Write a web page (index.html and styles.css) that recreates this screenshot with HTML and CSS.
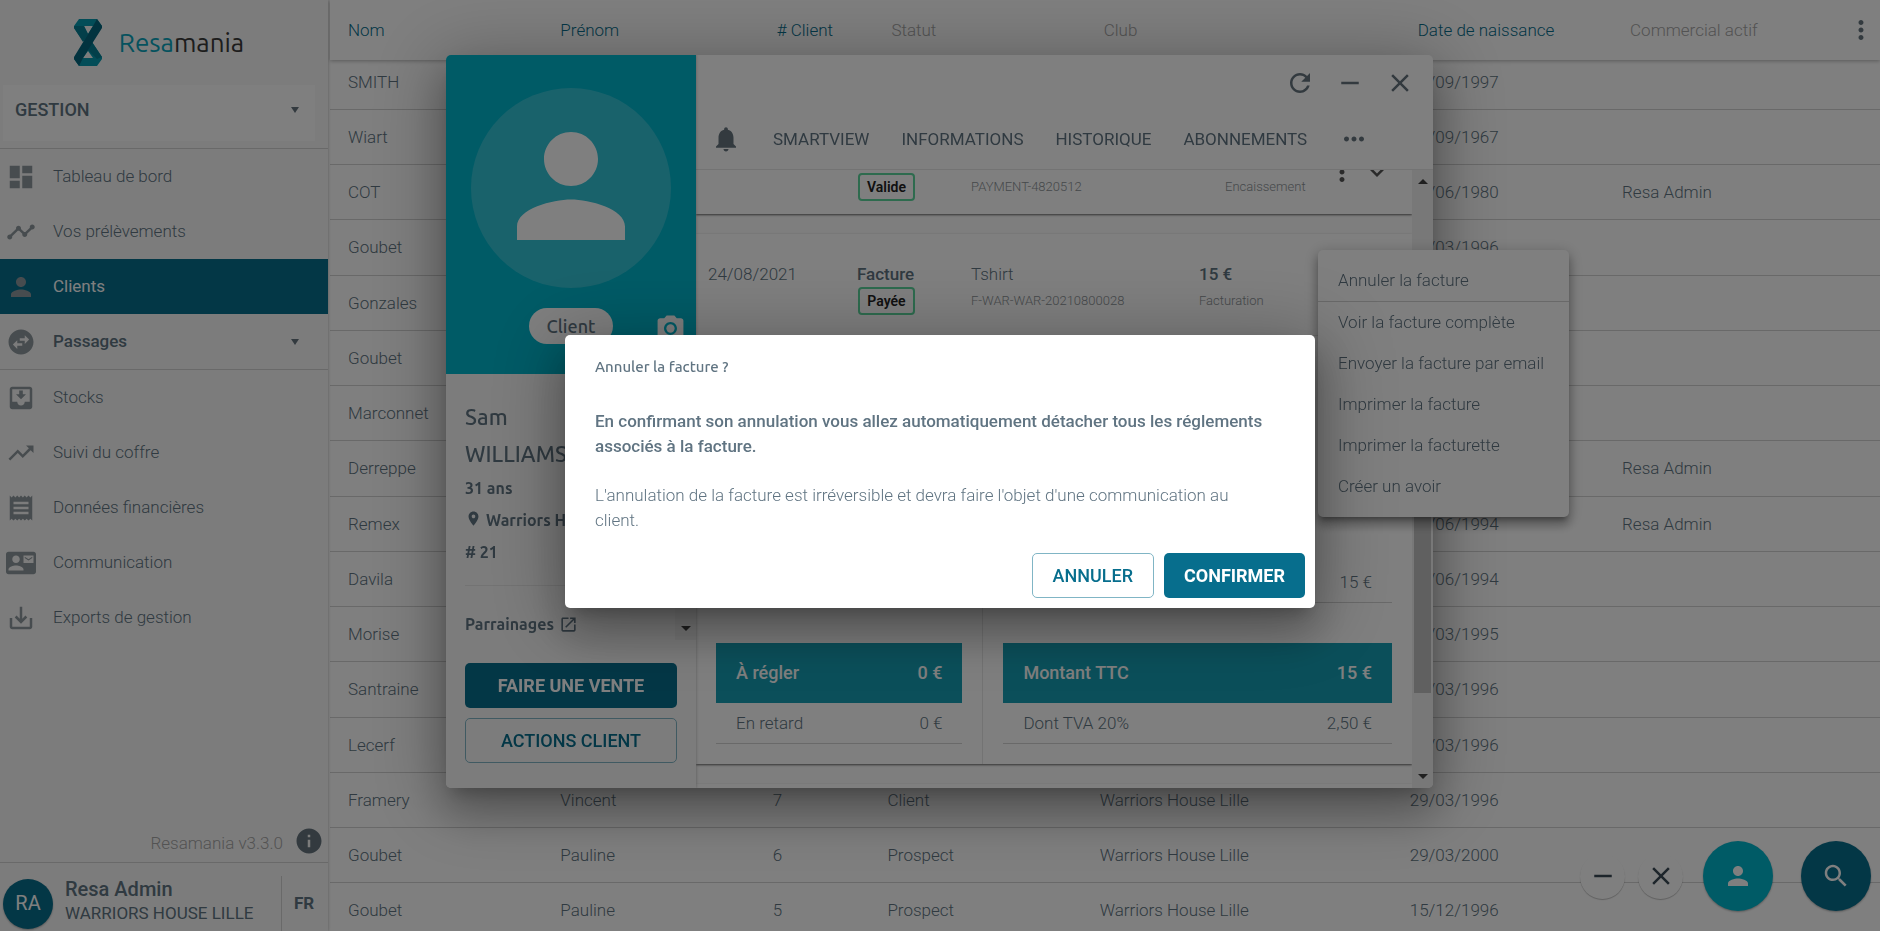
FILE: index.html
```html
<!DOCTYPE html>
<html lang="fr">
<head>
<meta charset="utf-8">
<title>Resamania - Clients</title>
<link rel="stylesheet" href="styles.css">
</head>
<body>
<svg class="sprite" aria-hidden="true">
  <symbol id="i-person" viewBox="0 0 24 24"><path d="M12 12c2.21 0 4-1.79 4-4s-1.79-4-4-4-4 1.79-4 4 1.79 4 4 4zm0 2c-2.67 0-8 1.34-8 4v2h16v-2c0-2.66-5.33-4-8-4z"/></symbol>
  <symbol id="i-close" viewBox="0 0 24 24"><path d="M19 6.41L17.59 5 12 10.59 6.41 5 5 6.41 10.59 12 5 17.59 6.41 19 12 13.41 17.59 19 19 17.59 13.41 12z"/></symbol>
  <symbol id="i-minus" viewBox="0 0 24 24"><path d="M19 13H5v-2h14v2z"/></symbol>
  <symbol id="i-more" viewBox="0 0 24 24"><path d="M12 8c1.1 0 2-.9 2-2s-.9-2-2-2-2 .9-2 2 .9 2 2 2zm0 2c-1.1 0-2 .9-2 2s.9 2 2 2 2-.9 2-2-.9-2-2-2zm0 6c-1.1 0-2 .9-2 2s.9 2 2 2 2-.9 2-2-.9-2-2-2z"/></symbol>
</svg>

<div class="app">
  <aside class="sidebar">
    <div class="brand">
      <svg class="brand-mark" viewBox="0 0 28 47" aria-hidden="true">
        <path fill="#079bb0" fill-rule="evenodd" d="M5 0h18l5 7-14 17-5-2L0 9V7zM10 7h9l-5 8z"/>
        <path fill="#067f95" d="M0 7h10l4 8-5 8L0 9z"/>
        <path fill="#079bb0" fill-rule="evenodd" d="M18 23l10 15v2l-5 7H5l-5-7 14-16zM14 32l5 7H9z"/>
        <path fill="#067f95" d="M18 23l10 15-5 2-9-9z"/>
        <path fill="#04667f" d="M23 0l5 7v2L9 39l-4 8-5-7v-2L19 7z"/>
      </svg>
      <span class="brand-name"><span class="brand-accent">Resa</span>mania</span>
    </div>
    <button class="section-select" type="button"><span>GESTION</span><i class="caret"></i></button>
    <nav class="nav">
      <a class="nav-item" href="#"><svg viewBox="0 0 24 24"><path d="M3 13h8V3H3v10zm0 8h8v-6H3v6zm10 0h8V11h-8v10zm0-18v6h8V3h-8z"/></svg>Tableau de bord</a>
      <a class="nav-item" href="#"><svg viewBox="0 0 24 24"><path d="M23 8c0 1.100-.9 2-2 2-.18 0-.35-.02-.51-.07l-3.560 3.550c.05.16.07.34.07.52 0 1.100-.9 2-2 2s-2-.9-2-2c0-.18.02-.36.07-.52l-2.550-2.550c-.16.05-.34.07-.52.07s-.36-.02-.52-.07l-4.550 4.560c.05.16.07.33.07.51 0 1.100-.9 2-2 2s-2-.9-2-2 .9-2 2-2c.18 0 .35.02.51.07l4.560-4.550C8.020 9.360 8 9.180 8 9c0-1.100.9-2 2-2s2 .9 2 2c0 .18-.02.36-.07.52l2.550 2.550c.16-.05.34-.07.52-.07s.36.02.52.07l3.550-3.560C19.020 8.350 19 8.180 19 8c0-1.100.9-2 2-2s2 .9 2 2z"/></svg>Vos prélèvements</a>
      <a class="nav-item nav-item--active" href="#"><svg><use href="#i-person"/></svg>Clients</a>
      <a class="nav-item nav-item--group" href="#"><svg viewBox="0 0 24 24"><path d="M22 12c0-5.520-4.480-10-10-10S2 6.480 2 12s4.480 10 10 10 10-4.480 10-10zm-7-5.500l3.500 3.500-3.500 3.500V11h-4V9h4V6.500zm-6 11L5.500 14 9 10.500V13h4v2H9v2.500z"/></svg>Passages<i class="caret"></i></a>
      <a class="nav-item" href="#"><svg viewBox="0 0 24 24"><path d="M16 9h-2.550V6h-2.900v3H8l4 4zm3-6H4.990C3.880 3 3 3.900 3 5v14c0 1.100.88 2 1.990 2H19c1.100 0 2-.9 2-2V5c0-1.100-.9-2-2-2zm0 12h-4c0 1.660-1.350 3-3 3s-3-1.340-3-3H4.990V5H19v10z"/></svg>Stocks</a>
      <a class="nav-item" href="#"><svg viewBox="0 0 24 24"><path d="M16 6l2.290 2.290-4.880 4.880-4-4L2 16.590 3.410 18l6-6 4 4 6.300-6.290L22 12V6z"/></svg>Suivi du coffre</a>
      <a class="nav-item" href="#"><svg viewBox="0 0 24 24"><path d="M18 17H6v-2h12v2zm0-4H6v-2h12v2zm0-4H6V7h12v2zM3 22l1.500-1.500L6 22l1.500-1.500L9 22l1.500-1.500L12 22l1.500-1.500L15 22l1.500-1.500L18 22l1.500-1.500L21 22V2l-1.500 1.500L18 2l-1.500 1.500L15 2l-1.500 1.500L12 2l-1.500 1.500L9 2 7.500 3.500 6 2 4.500 3.500 3 2v20z"/></svg>Données financières</a>
      <a class="nav-item" href="#"><svg viewBox="0 0 24 24"><path d="M21 8V7l-3 2-3-2v1l3 2 3-2zm1-5H2C.9 3 0 3.900 0 5v14c0 1.100.9 2 2 2h20c1.100 0 1.990-.9 1.990-2L24 5c0-1.100-.9-2-2-2zM8 6c1.660 0 3 1.340 3 3s-1.340 3-3 3-3-1.340-3-3 1.340-3 3-3zm6 12H2v-1c0-2 4-3.100 6-3.100s6 1.100 6 3.100v1zm8-6h-8V6h8v6z"/></svg>Communication</a>
      <a class="nav-item" href="#"><svg viewBox="0 0 24 24"><path d="M19 12v7H5v-7H3v7c0 1.100.9 2 2 2h14c1.100 0 2-.9 2-2v-7h-2zm-6 .67l2.590-2.580L17 11.500l-5 5-5-5 1.410-1.410L11 12.670V3h2z"/></svg>Exports de gestion</a>
    </nav>
    <div class="version"><span>Resamania v3.3.0</span><svg viewBox="0 0 24 24"><path d="M12 2C6.480 2 2 6.480 2 12s4.480 10 10 10 10-4.480 10-10S17.520 2 12 2zm1 15h-2v-6h2v6zm0-8h-2V7h2v2z"/></svg></div>
    <div class="account">
      <span class="account-avatar">RA</span>
      <div class="account-text"><div class="account-name">Resa Admin</div><div class="account-club">WARRIORS HOUSE LILLE</div></div>
      <button class="lang" type="button">FR</button>
    </div>
  </aside>

  <main class="content">
    <table class="clients">
      <colgroup><col class="c-m"><col class="c-m"><col class="c-s"><col class="c-m"><col class="c-l"><col class="c-m"><col></colgroup>
      <thead><tr><th class="on">Nom</th><th class="on">Prénom</th><th class="on"># Client</th><th>Statut</th><th>Club</th><th class="on">Date de naissance</th><th><div class="th-last">Commercial actif<button class="icon-btn" type="button" aria-label="Colonnes"><svg><use href="#i-more"/></svg></button></div></th></tr></thead>
      <tbody>
        <tr><td>SMITH</td><td></td><td></td><td></td><td></td><td>29/09/1997</td><td></td></tr>
        <tr><td>Wiart</td><td></td><td></td><td></td><td></td><td>29/09/1967</td><td></td></tr>
        <tr><td>COT</td><td></td><td></td><td></td><td></td><td>29/06/1980</td><td>Resa Admin</td></tr>
        <tr><td>Goubet</td><td></td><td></td><td></td><td></td><td>29/03/1996</td><td></td></tr>
        <tr><td>Gonzales</td><td></td><td></td><td></td><td></td><td></td><td></td></tr>
        <tr><td>Goubet</td><td></td><td></td><td></td><td></td><td></td><td></td></tr>
        <tr><td>Marconnet</td><td></td><td></td><td></td><td></td><td></td><td></td></tr>
        <tr><td>Derreppe</td><td></td><td></td><td></td><td></td><td></td><td>Resa Admin</td></tr>
        <tr><td>Remex</td><td></td><td></td><td></td><td></td><td>29/06/1994</td><td>Resa Admin</td></tr>
        <tr><td>Davila</td><td></td><td></td><td></td><td></td><td>29/06/1994</td><td></td></tr>
        <tr><td>Morise</td><td></td><td></td><td></td><td></td><td>29/03/1995</td><td></td></tr>
        <tr><td>Santraine</td><td></td><td></td><td></td><td></td><td>29/03/1996</td><td></td></tr>
        <tr><td>Lecerf</td><td></td><td></td><td></td><td></td><td>29/03/1996</td><td></td></tr>
        <tr><td>Framery</td><td>Vincent</td><td>7</td><td>Client</td><td>Warriors House Lille</td><td>29/03/1996</td><td></td></tr>
        <tr><td>Goubet</td><td>Pauline</td><td>6</td><td>Prospect</td><td>Warriors House Lille</td><td>29/03/2000</td><td></td></tr>
        <tr><td>Goubet</td><td>Pauline</td><td>5</td><td>Prospect</td><td>Warriors House Lille</td><td>15/12/1996</td><td></td></tr>
      </tbody>
    </table>
  </main>
</div>

<section class="client-window">
  <div class="profile">
    <div class="profile-hero">
      <div class="avatar"><svg><use href="#i-person"/></svg></div>
      <div class="hero-foot"><span class="status-pill">Client</span><svg class="camera" viewBox="0 0 24 24"><circle cx="12" cy="12" r="3.200"/><path d="M9 2L7.170 4H4c-1.100 0-2 .9-2 2v12c0 1.100.9 2 2 2h16c1.100 0 2-.9 2-2V6c0-1.100-.9-2-2-2h-3.170L15 2H9zm3 15c-2.760 0-5-2.240-5-5s2.240-5 5-5 5 2.240 5 5-2.240 5-5 5z"/></svg></div>
    </div>
    <div class="profile-scroll">
      <div class="profile-info">
        <div class="profile-name">Sam</div>
        <div class="profile-name">WILLIAMS</div>
        <p class="profile-line">31 ans</p>
        <p class="profile-line"><svg viewBox="0 0 24 24"><path d="M12 2C8.130 2 5 5.130 5 9c0 5.250 7 13 7 13s7-7.750 7-13c0-3.870-3.130-7-7-7zm0 9.500c-1.380 0-2.500-1.120-2.500-2.500s1.120-2.500 2.500-2.500 2.500 1.120 2.500 2.500-1.120 2.500-2.500 2.500z"/></svg>Warriors House</p>
        <p class="profile-line"># 21</p>
        <a class="profile-link" href="#">Parrainages<svg viewBox="0 0 24 24"><path d="M19 19H5V5h7V3H5c-1.110 0-2 .9-2 2v14c0 1.100.89 2 2 2h14c1.100 0 2-.9 2-2v-7h-2v7zM14 3v2h3.590l-9.830 9.830 1.410 1.410L19 6.410V10h2V3h-7z"/></svg></a>
      </div>
      <div class="scrollbar"><i class="arrow-down"></i></div>
    </div>
    <div class="profile-actions">
      <button class="btn btn--solid" type="button">FAIRE UNE VENTE</button>
      <button class="btn btn--outline" type="button">ACTIONS CLIENT</button>
    </div>
  </div>
  <div class="detail">
    <div class="window-bar">
      <button class="icon-btn" type="button" aria-label="Actualiser"><svg viewBox="0 0 24 24"><path d="M17.650 6.350C16.200 4.900 14.210 4 12 4c-4.420 0-7.990 3.580-7.990 8s3.570 8 7.990 8c3.730 0 6.840-2.550 7.730-6h-2.080c-.82 2.330-3.040 4-5.650 4-3.310 0-6-2.690-6-6s2.690-6 6-6c1.660 0 3.140.69 4.220 1.780L13 11h7V4l-2.350 2.350z"/></svg></button>
      <button class="icon-btn" type="button" aria-label="Réduire"><svg><use href="#i-minus"/></svg></button>
      <button class="icon-btn" type="button" aria-label="Fermer"><svg><use href="#i-close"/></svg></button>
    </div>
    <nav class="tabs">
      <button class="icon-btn" type="button" aria-label="Notifications"><svg viewBox="0 0 24 24"><path d="M12 22c1.100 0 2-.9 2-2h-4c0 1.100.89 2 2 2zm6-6v-5c0-3.070-1.640-5.640-4.500-6.320V4c0-.83-.67-1.500-1.500-1.500s-1.500.67-1.500 1.500v.68C7.630 5.360 6 7.920 6 11v5l-2 2v1h16v-1l-2-2z"/></svg></button>
      <a href="#">SMARTVIEW</a><a href="#">INFORMATIONS</a><a href="#">HISTORIQUE</a><a href="#">ABONNEMENTS</a>
      <button class="icon-btn" type="button" aria-label="Plus"><svg viewBox="0 0 24 24"><path d="M6 10c-1.100 0-2 .9-2 2s.9 2 2 2 2-.9 2-2-.9-2-2-2zm12 0c-1.100 0-2 .9-2 2s.9 2 2 2 2-.9 2-2-.9-2-2-2zm-6 0c-1.100 0-2 .9-2 2s.9 2 2 2 2-.9 2-2-.9-2-2-2z"/></svg></button>
    </nav>
    <div class="feed-wrap">
      <div class="feed">
        <article class="card card--payment">
          <span></span>
          <span><span class="badge">Valide</span></span>
          <span class="ref">PAYMENT-4820512</span>
          <span class="ref">Encaissement</span>
          <span class="card-tools"><svg><use href="#i-more"/></svg><svg viewBox="0 0 24 24"><path d="M16.590 8.590L12 13.170 7.410 8.590 6 10l6 6 6-6z"/></svg></span>
        </article>
        <article class="card card--invoice">
          <header class="entry">
            <div>24/08/2021</div>
            <div><strong>Facture</strong><span class="badge">Payée</span></div>
            <div>Tshirt<span class="ref">F-WAR-WAR-20210800028</span></div>
            <div><strong>15 €</strong><span class="ref">Facturation</span></div>
          </header>
          <div class="sums">
            <div class="sum-col">
              <div class="sum-total"><span>À régler</span><span>0 €</span></div>
              <div class="sum-row"><span>En retard</span><span>0 €</span></div>
            </div>
            <div class="sum-col">
              <div class="sum-row sum-row--first"><span></span><span>15 €</span></div>
              <div class="sum-total"><span>Montant TTC</span><span>15 €</span></div>
              <div class="sum-row"><span>Dont TVA 20%</span><span>2,50 €</span></div>
            </div>
          </div>
        </article>
        <div class="card card--next"></div>
      </div>
      <div class="scrollbar scrollbar--tall"><i class="arrow-up"></i><i class="thumb"></i><i class="arrow-down"></i></div>
    </div>
  </div>
</section>

<div class="menu" role="menu">
  <button type="button" role="menuitem">Annuler la facture</button>
  <button type="button" role="menuitem">Voir la facture complète</button>
  <button type="button" role="menuitem">Envoyer la facture par email</button>
  <button type="button" role="menuitem">Imprimer la facture</button>
  <button type="button" role="menuitem">Imprimer la facturette</button>
  <button type="button" role="menuitem">Créer un avoir</button>
</div>

<div class="fabs">
  <button class="fab fab--small" type="button" aria-label="Réduire"><svg><use href="#i-minus"/></svg></button>
  <button class="fab fab--small" type="button" aria-label="Fermer"><svg><use href="#i-close"/></svg></button>
  <button class="fab fab--cyan" type="button" aria-label="Client"><svg><use href="#i-person"/></svg></button>
  <button class="fab fab--blue" type="button" aria-label="Rechercher"><svg viewBox="0 0 24 24"><path d="M15.500 14h-.79l-.28-.27C15.410 12.590 16 11.110 16 9.500 16 5.910 13.090 3 9.500 3S3 5.910 3 9.500 5.910 16 9.500 16c1.610 0 3.090-.59 4.230-1.570l.27.28v.79l5 4.990L20.490 19l-4.990-5zm-6 0C7.010 14 5 11.990 5 9.500S7.010 5 9.500 5 14 7.010 14 9.500 11.990 14 9.500 14z"/></svg></button>
</div>

<div class="backdrop">
  <div class="dialog" role="dialog" aria-labelledby="dlg-title">
    <h1 class="dialog-title" id="dlg-title">Annuler la facture ?</h1>
    <div class="dialog-body">
      <p><strong>En confirmant son annulation vous allez automatiquement détacher tous les réglements<br>associés à la facture.</strong></p>
      <p>L'annulation de la facture est irréversible et devra faire l'objet d'une communication au<br>client.</p>
    </div>
    <div class="dialog-actions">
      <button class="btn btn--outline" type="button">ANNULER</button>
      <button class="btn btn--solid" type="button">CONFIRMER</button>
    </div>
  </div>
</div>
</body>
</html>
```
FILE: styles.css
```css
:root {
  --text: #607482;
  --icon: #66757f;
  --muted: #a6a6a6;
  --primary: #076e8d;
  --cyan: #00b6cd;
  --line: #d2d2d2;
  --panel: #f9f9f9;
  --display: Ubuntu, "Noto Sans", sans-serif;
  --elevation: 0 11px 15px -7px rgba(0, 0, 0, .2), 0 24px 38px 3px rgba(0, 0, 0, .2), 0 9px 70px 10px rgba(0, 0, 0, .25);
}

* { box-sizing: border-box; }

body {
  margin: 0;
  height: 100vh;
  overflow: hidden;
  background: #fff;
  color: var(--text);
  font: 300 17px/25px Roboto, sans-serif;
}

a { color: inherit; text-decoration: none; }
button { font: inherit; color: inherit; background: none; border: 0; padding: 0; }
h1, p { margin: 0; }
strong { font-weight: 500; }
svg { width: 30px; height: 30px; fill: currentColor; flex: none; display: block; }
.sprite { display: none; }
.icon-btn { display: flex; color: var(--icon); }

.caret {
  border: 4px solid transparent;
  border-top: 6px solid var(--icon);
  border-bottom: 0;
}

/* Shell */
.app { display: flex; height: 100vh; }

.sidebar {
  width: 328px;
  flex: none;
  display: flex;
  flex-direction: column;
  background: var(--panel);
  box-shadow: 0 0 3px rgba(0, 0, 0, .3);
  z-index: 1;
}

.brand {
  display: flex;
  align-items: center;
  justify-content: center;
  gap: 17px;
  height: 85px;
  padding-right: 10px;
}
.brand-mark { width: 28px; height: 47px; }
.brand-name { font: 400 26px/30px var(--display); color: #3a3a3a; }
.brand-accent { color: #0aa4bc; }

.section-select {
  display: flex;
  align-items: center;
  justify-content: space-between;
  height: 56px;
  margin: 0 13px 7px 3px;
  padding: 0 16px 7px 12px;
  background: #fff;
  font-weight: 500;
  font-size: 18px;
}

.nav { border-top: 1px solid var(--line); }
.nav-item {
  display: flex;
  align-items: center;
  gap: 17px;
  height: 55px;
  padding: 0 29px 0 6px;
}
.nav-item svg { color: #8f999e; }
.nav-item .caret { margin-left: auto; }
.nav-item--active { background: var(--primary); color: #fff; font-weight: 400; }
.nav-item--group { height: 56px; border-bottom: 1px solid var(--line); font-weight: 500; }

.version {
  display: flex;
  align-items: center;
  justify-content: flex-end;
  gap: 11px;
  margin-top: auto;
  padding: 0 4px 6px 0;
  color: var(--muted);
}
.version span { padding-top: 4px; }
.version svg { color: var(--icon); }

.account {
  display: flex;
  align-items: center;
  height: 69px;
  padding: 13px 0 0 3px;
  border-top: 1px solid var(--line);
}
.account-avatar {
  display: grid;
  place-items: center;
  width: 50px;
  height: 50px;
  border-radius: 50%;
  background: var(--primary);
  color: #fff;
  font-weight: 400;
  font-size: 20px;
  box-shadow: 0 1px 2px rgba(0, 0, 0, .3);
}
.account-text { flex: 1; padding: 0 0 5px 12px; font-weight: 400; line-height: 24px; }
.account-name { font-weight: 500; font-size: 20px; }
.lang {
  align-self: stretch;
  width: 47px;
  padding-right: 2px;
  border-left: 1px solid var(--line);
  font-weight: 700;
}

/* Client list */
.content { flex: 1; min-width: 0; padding-left: 2px; overflow: hidden; }
.clients { width: 100%; table-layout: fixed; border-spacing: 0; }
.c-m { width: 13.7%; }
.c-s { width: 7.4%; }
.c-l { width: 20%; }
.clients thead { position: relative; z-index: 1; box-shadow: 0 1px 4px rgba(0, 0, 0, .3); background: #fff; }
.clients th {
  height: 60px;
  padding: 0 0 0 18px;
  text-align: left;
  font-weight: 300;
  color: var(--muted);
}
.clients th:nth-child(n + 3) { padding-left: 22px; }
.clients th:nth-child(n + 6) { padding-left: 26px; }
.clients th.on { color: var(--primary); }
.th-last { display: flex; justify-content: space-between; align-items: center; padding-right: 4px; }
.clients td {
  height: 55px;
  padding: 0 0 0 18px;
  border-bottom: 1px solid var(--line);
}
.clients tr:nth-child(4n) td { height: 56px; }
.clients tbody tr:first-child td { height: 50px; padding-bottom: 5px; }

/* Client window */
.client-window {
  position: fixed;
  left: 446px;
  top: 55px;
  width: 987px;
  display: flex;
  border-radius: 5px;
  overflow: hidden;
  background: #fff;
  box-shadow: var(--elevation);
  z-index: 2;
}
.profile {
  width: 250px;
  flex: none;
  display: flex;
  flex-direction: column;
  background: var(--panel);
  box-shadow: 0 0 3px rgba(0, 0, 0, .3);
  z-index: 1;
}
.profile-hero { padding: 33px 0 30px; background: var(--cyan); }
.avatar {
  display: grid;
  place-items: center;
  width: 200px;
  height: 200px;
  margin: 0 auto 20px;
  padding-bottom: 4px;
  border-radius: 50%;
  background: rgba(255, 255, 255, .2);
  color: #fff;
}
.avatar svg { width: 162px; height: 162px; }
.hero-foot { display: grid; grid-template-columns: 1fr auto 1fr; align-items: center; color: #fff; }
.camera { width: 31px; height: 31px; justify-self: end; margin: 5px 10px 0 0; }
.status-pill {
  grid-column: 2;
  padding: 5px 18px;
  border-radius: 18px;
  background: #fff;
  color: var(--text);
  font: 500 18px/26px var(--display);
}
.profile-scroll { display: flex; height: 266px; }
.profile-info { flex: 1; padding: 24px 0 0 19px; font-family: var(--display); font-weight: 600; overflow: hidden; white-space: nowrap; }
.profile-name { font: 500 22px/37px var(--display); }
.profile-line { display: flex; align-items: center; gap: 4px; height: 32px; font-size: 16px; }
.profile-line svg { width: 17px; height: 17px; margin-bottom: 4px; }
.profile-link {
  display: flex;
  align-items: center;
  gap: 5px;
  margin-top: 17px;
  padding-top: 26px;
  border-top: 1px solid #e6e6e6;
  font-size: 16px;
}
.profile-link svg { width: 19px; height: 19px; }
.profile-actions { display: grid; gap: 10px; padding: 23px 19px 25px; }

.btn {
  height: 45px;
  padding: 0 20px 1px;
  border-radius: 5px;
  font-weight: 500;
  font-size: 18px;
}
.btn--solid { background: var(--primary); color: #fff; font-weight: 700; }
.btn--outline { border: 1px solid #80b5c5; color: var(--primary); }

.scrollbar {
  width: 21px;
  flex: none;
  display: flex;
  flex-direction: column;
  align-items: center;
  padding: 9px 0;
  background: #f1f1f1;
}
.arrow-down { margin-top: auto; border: 5px solid transparent; border-top-color: #404040; border-bottom: 0; }
.arrow-up { border: 5px solid transparent; border-bottom-color: #404040; border-top: 0; }
.thumb { width: 17px; height: 240px; margin: auto 0 81px; background: #c1c1c1; }
.thumb + .arrow-down { margin-top: 0; }

.detail { flex: 1; min-width: 0; display: flex; flex-direction: column; }
.window-bar { display: flex; justify-content: flex-end; gap: 20px; padding: 13px 18px 11px; }
.tabs {
  display: flex;
  align-items: center;
  gap: 32px;
  height: 61px;
  padding: 0 15px;
  border-bottom: 1px solid #e6e6e6;
  font-weight: 400;
}
.feed-wrap { flex: 1; display: flex; }
.feed { flex: 1; display: flex; flex-direction: column; gap: 20px; background: #fcfcfc; }
.card { background: #fff; box-shadow: 0 1px 2px rgba(0, 0, 0, .6); }
.card--payment, .entry {
  display: grid;
  grid-template-columns: 149px 114px 228px 1fr;
  padding-left: 12px;
}
.card--payment { grid-template-columns: 149px 114px 254px 1fr auto; height: 44px; overflow: hidden; clip-path: inset(0 0 -4px 0); }
.card--payment .badge { margin-top: 3px; }
.card--payment > .ref { margin-top: 8px; }
.card-tools { display: flex; gap: 5px; margin-top: -13px; padding-right: 20px; color: #555; }
.card--next { flex: 1; min-height: 2px; }
.entry { padding-top: 28px; height: 102px; border-bottom: 1px solid #e6e6e6; }
.badge {
  display: block;
  width: 57px;
  margin-left: 1px;
  border: 2px solid #5cd79d;
  border-radius: 4px;
  color: #222;
  font-weight: 600;
  font-size: 14px;
  line-height: 24px;
  text-align: center;
}
.ref { display: block; font-size: 13px; line-height: 18px; margin-top: 5px; color: #8c9296; }
.sums { display: grid; grid-template-columns: 2fr 3fr; height: 428px; }
.sum-col { display: flex; flex-direction: column; justify-content: flex-end; padding: 20px; }
.sum-col + .sum-col { border-left: 1px solid #e6e6e6; }
.sum-row, .sum-total { display: flex; align-items: center; justify-content: space-between; padding: 0 20px; }
.sum-row { height: 41px; border-bottom: 1px solid var(--line); }
.sum-row--first { margin-bottom: 40px; }
.sum-total { height: 60px; padding-bottom: 2px; background: #169fb5; color: #fff; font-weight: 500; font-size: 18px; }

/* Invoice menu */
.menu {
  position: fixed;
  left: 1318px;
  top: 250px;
  width: 251px;
  padding: 10px 0;
  display: flex;
  flex-direction: column;
  border-radius: 5px;
  background: #fff;
  box-shadow: 0 5px 5px -3px rgba(0, 0, 0, .3), 0 8px 10px 1px rgba(0, 0, 0, .2), 0 3px 14px 2px rgba(0, 0, 0, .2);
  z-index: 3;
}
.menu button { height: 41px; padding: 0 20px; text-align: left; white-space: nowrap; }
.menu button:first-child { height: 42px; border-bottom: 1px solid var(--line); }

/* Floating buttons */
.fabs { position: fixed; right: 9px; bottom: 20px; display: flex; align-items: center; gap: 28px; z-index: 1; }
.fab {
  display: grid;
  place-items: center;
  width: 70px;
  height: 70px;
  border-radius: 50%;
  color: #fff;
  box-shadow: 0 1px 2px rgba(0, 0, 0, .3);
}
.fab--small { width: 45px; height: 45px; margin-right: -15px; background: #fff; color: #3b4a56; box-shadow: 0 1px 1px rgba(0, 0, 0, .25); }
.fab--small + .fab--cyan { margin-left: 7px; }
.fab--cyan { background: var(--cyan); }
.fab--blue { background: var(--primary); }

/* Confirmation dialog */
.backdrop {
  position: fixed;
  inset: 0;
  display: grid;
  place-items: center;
  padding-top: 12px;
  background: rgba(0, 0, 0, .5);
  z-index: 4;
}
.dialog { width: 750px; border-radius: 5px; background: #fff; box-shadow: var(--elevation); }
.dialog-title { padding: 19px 30px 20px; font: 500 15px/25px var(--display); }
.dialog-body { display: grid; gap: 24px; padding: 10px 30px 20px; }
.dialog-actions { display: flex; justify-content: flex-end; gap: 10px; padding: 0 10px 10px; }
```
